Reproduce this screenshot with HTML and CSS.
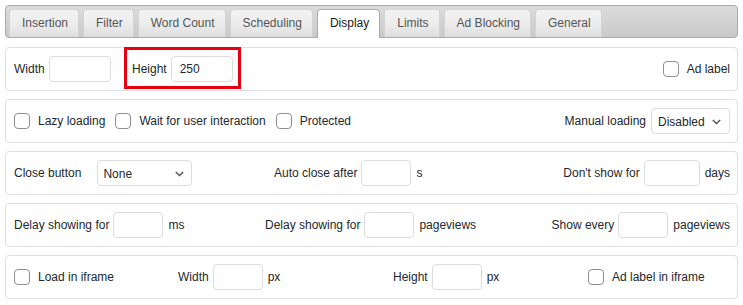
FILE: index.html
```html
<!DOCTYPE html>
<html lang="en">
<head>
    <meta charset="UTF-8">
    <title>Display options</title>
    <link rel="stylesheet" href="styles.css">
</head>
<body>
<div class="page">

    <ul class="tabs">
        <li class="tab">Insertion</li>
        <li class="tab">Filter</li>
        <li class="tab">Word Count</li>
        <li class="tab">Scheduling</li>
        <li class="tab active">Display</li>
        <li class="tab">Limits</li>
        <li class="tab">Ad Blocking</li>
        <li class="tab">General</li>
    </ul>

    <div class="panel">

        <div class="row row-size">
            <div class="field"><span>Width</span><input type="text" class="num wide"></div>
            <div class="field marked"><span>Height</span><input type="text" class="num wide" value="250"></div>
            <label class="check end"><input type="checkbox"><span>Ad label</span></label>
        </div>

        <div class="row row-load">
            <div class="checks">
                <label class="check"><input type="checkbox"><span>Lazy loading</span></label>
                <label class="check"><input type="checkbox"><span>Wait for user interaction</span></label>
                <label class="check"><input type="checkbox"><span>Protected</span></label>
            </div>
            <div class="field end">
                <span>Manual loading</span>
                <div class="select manual">
                    <span>Disabled</span>
                    <svg width="9" height="6" viewBox="0 0 9 6"><path d="M0.8 1 L4.5 4.6 L8.2 1" fill="none" stroke="#555" stroke-width="1.4"/></svg>
                </div>
            </div>
        </div>

        <div class="row row-close">
            <div class="field">
                <span class="lbl-close">Close button</span>
                <div class="select close">
                    <span>None</span>
                    <svg width="9" height="6" viewBox="0 0 9 6"><path d="M0.8 1 L4.5 4.6 L8.2 1" fill="none" stroke="#555" stroke-width="1.4"/></svg>
                </div>
            </div>
            <div class="field"><span>Auto close after</span><input type="text" class="num"><span class="unit">s</span></div>
            <div class="field end"><span>Don't show for</span><input type="text" class="num days"><span class="unit">days</span></div>
        </div>

        <div class="row row-delay">
            <div class="field"><span>Delay showing for</span><input type="text" class="num"><span class="unit">ms</span></div>
            <div class="field"><span>Delay showing for</span><input type="text" class="num"><span class="unit">pageviews</span></div>
            <div class="field end"><span>Show every</span><input type="text" class="num"><span class="unit">pageviews</span></div>
        </div>

        <div class="row row-iframe">
            <label class="check"><input type="checkbox"><span>Load in iframe</span></label>
            <div class="field"><span>Width</span><input type="text" class="num"><span class="unit">px</span></div>
            <div class="field"><span>Height</span><input type="text" class="num"><span class="unit">px</span></div>
            <label class="check"><input type="checkbox"><span>Ad label in iframe</span></label>
        </div>

    </div>
</div>
</body>
</html>
```

FILE: styles.css
```css
body {
    margin: 0;
    background-color: #fff;
    font-family: "Liberation Sans", Arial, sans-serif;
    font-size: 12px;
    color: #23282d;
}

.page {
    padding: 5px;
}

/* tab strip */
.tabs {
    list-style: none;
    margin: 0;
    padding: 3px 3px 0 3px;
    display: flex;
    align-items: flex-end;
    gap: 4px;
    border: 1px solid #aaa;
    border-radius: 4px;
    background: linear-gradient(#dcdcdc, #c9c9c9);
}

.tab {
    height: 27px;
    line-height: 27px;
    padding: 0 10px 0 12px;
    border: 1px solid #d3d3d3;
    border-bottom: 0;
    border-radius: 4px 4px 0 0;
    background: linear-gradient(#f3f3f3, #ebebeb 55%, #dedede);
    color: #555;
    font-size: 12px;
}

.tab.active {
    background: #fff;
    border-color: #aaa;
    color: #212121;
    padding-bottom: 1px;
    margin-bottom: -1px;
}

/* option rows */
.panel {
    margin-top: 9px;
}

.row {
    display: grid;
    align-items: center;
    height: 42px;
    padding: 0 7px 0 8px;
    margin-bottom: 8px;
    border: 1px solid #dfdfdf;
    border-radius: 4px;
}

.row-size   { grid-template-columns: 118px auto 1fr; }
.row-load   { grid-template-columns: 1fr auto; }
.row-close  { grid-template-columns: 260px auto 1fr; }
.row-delay  { grid-template-columns: 251px auto 1fr; }
.row-iframe { grid-template-columns: 164px 215px 195px 1fr; }

.end {
    justify-self: end;
}

.field {
    display: flex;
    align-items: center;
    gap: 4px;
    white-space: nowrap;
}

.unit {
    margin-left: 1px;
}

.num {
    box-sizing: border-box;
    width: 50px;
    height: 26px;
    margin: 0;
    padding: 0 8px;
    border: 1px solid #dcdcdc;
    border-radius: 4px;
    font-family: inherit;
    font-size: 12px;
    color: #23282d;
    background: #fff;
}

.num.wide { width: 62px; }
.num.days { width: 56px; }

.checks {
    display: flex;
    align-items: center;
    gap: 10px;
}

.check {
    display: flex;
    align-items: center;
    gap: 8px;
    white-space: nowrap;
}

.check input {
    appearance: none;
    -webkit-appearance: none;
    box-sizing: border-box;
    width: 16px;
    height: 16px;
    margin: 0;
    border: 1px solid #8c8f94;
    border-radius: 4px;
    background: #fff;
}

.select {
    box-sizing: border-box;
    height: 26px;
    display: flex;
    align-items: center;
    justify-content: space-between;
    padding: 1px 7px 0 5px;
    border: 1px solid #dcdcdc;
    border-radius: 4px;
    background: #fff;
}

.select.close  { width: 95px; }
.select.manual { width: 79px; margin-left: 1px; padding-left: 6px; padding-right: 8px; }

.lbl-close {
    margin-right: 12px;
}

/* red marker round the height field */
.marked {
    position: relative;
}

.marked::after {
    content: "";
    position: absolute;
    left: -8px;
    right: -8px;
    top: -9px;
    bottom: -7px;
    border: 3px solid #e60012;
}
```
